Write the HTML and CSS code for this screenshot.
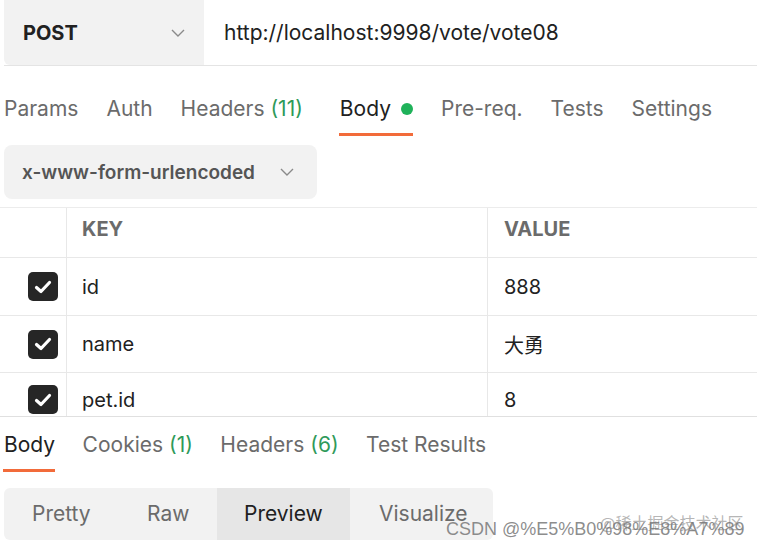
FILE: index.html
```html
<!DOCTYPE html>
<html>
<head>
<meta charset="utf-8">
<link rel="stylesheet" href="styles.css">
</head>
<body>
<div class="urlbar">
  <div class="method">
    <span class="method-name">POST</span>
    <svg class="chev" width="14" height="8" viewBox="0 0 14 8"><path d="M1 1 L7 7 L13 1" fill="none" stroke="#8a8a8a" stroke-width="1.4"/></svg>
  </div>
  <div class="url">http://localhost:9998/vote/vote08</div>
</div>

<div class="tabs req-tabs">
  <div class="tab">Params</div>
  <div class="tab">Auth</div>
  <div class="tab">Headers <span class="count">(11)</span></div>
  <div class="tab active body-tab">Body<span class="dot"></span></div>
  <div class="tab">Pre-req.</div>
  <div class="tab">Tests</div>
  <div class="tab">Settings</div>
</div>

<div class="bodytype-row">
  <div class="bodytype">
    <span>x-www-form-urlencoded</span>
    <svg class="chev" width="14" height="8" viewBox="0 0 14 8"><path d="M1 1 L7 7 L13 1" fill="none" stroke="#8a8a8a" stroke-width="1.4"/></svg>
  </div>
</div>

<div class="table">
  <div class="row head">
    <div class="c-check"></div>
    <div class="c-key">KEY</div>
    <div class="c-val">VALUE</div>
  </div>
  <div class="row r1">
    <div class="c-check"><span class="cb"><svg width="18" height="14" viewBox="0 0 18 14"><path d="M2.5 7.5 L7 11.5 L15.5 2.5" fill="none" stroke="#fff" stroke-width="3.2" stroke-linecap="round" stroke-linejoin="round"/></svg></span></div>
    <div class="c-key">id</div>
    <div class="c-val">888</div>
  </div>
  <div class="row r2">
    <div class="c-check"><span class="cb"><svg width="18" height="14" viewBox="0 0 18 14"><path d="M2.5 7.5 L7 11.5 L15.5 2.5" fill="none" stroke="#fff" stroke-width="3.2" stroke-linecap="round" stroke-linejoin="round"/></svg></span></div>
    <div class="c-key">name</div>
    <div class="c-val">大勇</div>
  </div>
  <div class="row last">
    <div class="c-check"><span class="cb"><svg width="18" height="14" viewBox="0 0 18 14"><path d="M2.5 7.5 L7 11.5 L15.5 2.5" fill="none" stroke="#fff" stroke-width="3.2" stroke-linecap="round" stroke-linejoin="round"/></svg></span></div>
    <div class="c-key">pet.id</div>
    <div class="c-val">8</div>
  </div>
</div>

<div class="tabs res-tabs">
  <div class="tab active">Body</div>
  <div class="tab">Cookies <span class="count">(1)</span></div>
  <div class="tab">Headers <span class="count">(6)</span></div>
  <div class="tab">Test Results</div>
</div>

<div class="seg-row">
  <div class="seg">
    <div class="seg-item s-pretty">Pretty</div>
    <div class="seg-item s-raw">Raw</div>
    <div class="seg-item s-preview selected">Preview</div>
    <div class="seg-item s-vis">Visualize</div>
  </div>
</div>

<div class="watermark">
  <div class="wm1">@稀土掘金技术社区</div>
  <div class="wm2">CSDN @%E5%B0%98%E8%A7%89</div>
</div>
</body>
</html>
```
FILE: styles.css
```css
html, body {
  margin: 0;
  padding: 0;
  background: #fff;
}
body {
  width: 757px;
  height: 547px;
  overflow: hidden;
  position: relative;
  font-family: Inter, "Noto Sans CJK SC", sans-serif;
  color: #212121;
}
.urlbar {
  display: flex;
  height: 66px;
  margin-left: 4px;
  border-bottom: 1px solid #e4e4e4;
  box-sizing: border-box;
}
.method {
  width: 200px;
  background: #f2f2f2;
  border-radius: 0 0 0 6px;
  display: flex;
  align-items: center;
  justify-content: space-between;
  padding: 0 19px 0 19px;
  box-sizing: border-box;
}
.method-name {
  font-size: 20px;
  font-weight: 700;
  color: #212121;
}
.url {
  display: flex;
  align-items: center;
  padding-left: 20px;
  font-size: 21px;
  color: #212121;
}
.tabs {
  display: flex;
  padding-left: 4px;
}
.req-tabs {
  height: 71px;
  padding-top: 14px;
  box-sizing: border-box;
  gap: 28px;
}
.body-tab {
  margin-left: 9px;
}
.tab {
  display: flex;
  align-items: center;
  font-size: 21px;
  color: #6b6b6b;
  position: relative;
  white-space: pre;
}
.tab.active {
  color: #212121;
}
.tab.active::after {
  content: "";
  position: absolute;
  left: -1px;
  right: 0;
  bottom: 0;
  height: 3px;
  background: #f26b3a;
}
.req-tabs .tab.active::after {
  bottom: 1px;
}
.count {
  color: #2f9a5a;
}
.dot {
  display: inline-block;
  width: 12px;
  height: 12px;
  border-radius: 50%;
  background: #1fb25a;
  margin-left: 10px;
}
.bodytype-row {
  padding: 8px 0 8px 4px;
}
.bodytype {
  width: 313px;
  height: 54px;
  background: #f2f2f2;
  border-radius: 8px;
  display: flex;
  align-items: center;
  gap: 25px;
  padding-left: 18px;
  box-sizing: border-box;
  font-size: 19px;
  font-weight: 600;
  color: #555;
}
.table {
  border-top: 1px solid #ececec;
}
.row {
  display: flex;
  height: 58px;
  border-bottom: 1px solid #e8e8e8;
  box-sizing: border-box;
}
.row.head {
  height: 50px;
}
.row.r2 {
  height: 57px;
}
.row.last {
  height: 44px;
  border-bottom: 1px solid #e0e0e0;
}
.c-check {
  width: 67px;
  flex: none;
  border-right: 1px solid #e8e8e8;
  display: flex;
  align-items: center;
  padding-left: 28px;
  box-sizing: border-box;
}
.c-key {
  width: 421px;
  flex: none;
  border-right: 1px solid #e8e8e8;
  padding-left: 15px;
  box-sizing: border-box;
  display: flex;
  align-items: center;
  font-size: 20px;
}
.c-val {
  flex: 1;
  padding-left: 16px;
  display: flex;
  align-items: center;
  font-size: 20px;
}
.head .c-key, .head .c-val {
  font-weight: 700;
  color: #6b6b6b;
  padding-bottom: 7px;
}
.row.last .c-key, .row.last .c-val {
  align-items: flex-start;
  padding-top: 15px;
}
.row.last .c-check {
  align-items: flex-start;
  padding-top: 12px;
}
.cb {
  width: 30px;
  height: 29px;
  border-radius: 5px;
  background: #262626;
  display: flex;
  align-items: center;
  justify-content: center;
}
.res-tabs {
  height: 56px;
  padding-bottom: 1px;
  box-sizing: border-box;
  gap: 27.5px;
}
.seg-row {
  padding: 15px 0 0 4px;
}
.seg {
  display: flex;
  width: 489px;
  height: 52px;
  background: #f2f2f2;
  border-radius: 6px;
  overflow: hidden;
}
.seg-item {
  display: flex;
  align-items: center;
  font-size: 21px;
  color: #6b6b6b;
  box-sizing: border-box;
  padding-bottom: 2px;
}
.s-pretty { width: 115px; padding-left: 28px; }
.s-raw { width: 98px; padding-left: 28px; }
.s-preview { width: 133px; padding-left: 27px; }
.s-vis { padding-left: 29px; }
.seg-item.selected {
  background: #e6e6e6;
  color: #212121;
}
.watermark {
  position: absolute;
  left: 446px;
  top: 505px;
  width: 300px;
}
.wm1 {
  position: absolute;
  left: 154px;
  top: 5px;
  font-size: 16px;
  color: rgba(150,150,150,0.7);
  white-space: nowrap;
}
.wm2 {
  position: absolute;
  left: 0;
  top: 14px;
  font-size: 18px;
  color: rgba(120,120,120,0.85);
  white-space: nowrap;
  font-family: "Liberation Sans", Arial, sans-serif;
}
```
